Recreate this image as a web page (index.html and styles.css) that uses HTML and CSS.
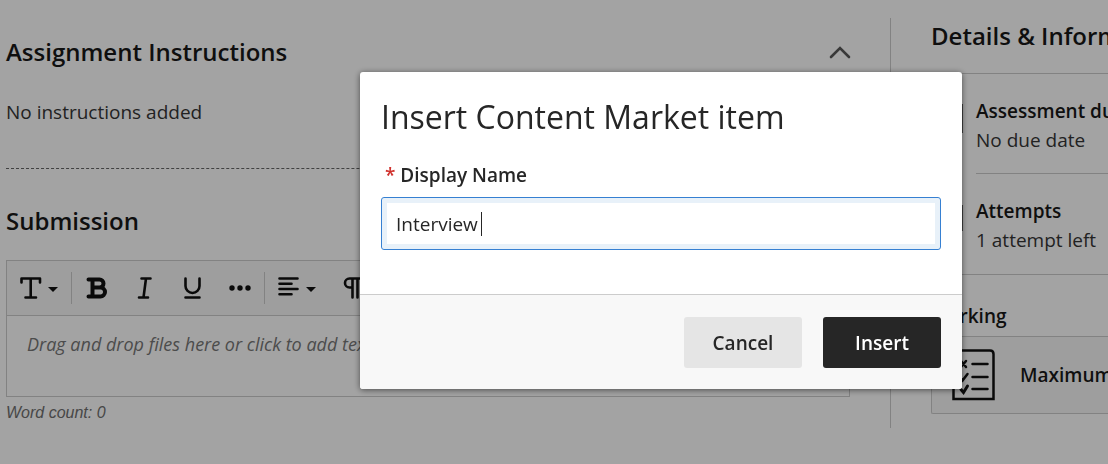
FILE: index.html
```html
<!DOCTYPE html>
<html lang="en">
<head>
<meta charset="utf-8">
<title>Assignment</title>
<link rel="stylesheet" href="styles.css">
</head>
<body>
<div class="page">
  <main class="content">
    <header class="section-head">
      <h2 class="heading">Assignment Instructions</h2>
      <button class="icon-button" type="button" aria-label="Collapse instructions">
        <svg width="24" height="24" viewBox="0 0 24 24" fill="none" stroke="#5a5a5a" stroke-width="2.6" stroke-linecap="round"><path d="M3 17 12 8l9 9"/></svg>
      </button>
    </header>
    <p class="instructions">No instructions added</p>
    <h2 class="heading">Submission</h2>
    <section class="editor" aria-label="Submission editor">
      <div class="toolbar" role="toolbar" aria-label="Formatting">
        <button class="tool" type="button" aria-label="Text style">
          <svg width="40" height="24" viewBox="0 0 40 24" fill="none" stroke="#111" stroke-width="2.6" stroke-linecap="round" stroke-linejoin="round"><path d="M2.500 6.500V2.500h18.500v4M11.700 2.500v19M6.500 21.500h10.500"/><path d="M29 11h10l-5 5z" fill="#111" stroke="none"/></svg>
        </button>
        <span class="divider"></span>
        <button class="tool" type="button" aria-label="Bold">
          <svg width="24" height="24" viewBox="0 0 24 24" fill="none" stroke="#111" stroke-width="4" stroke-linecap="round" stroke-linejoin="round"><path d="M4.500 3.500h11a4 4 0 0 1 0 8H9M8.500 3.500v17M4.500 20.500h12a4.500 4.500 0 0 0 0-9"/></svg>
        </button>
        <button class="tool" type="button" aria-label="Italic">
          <svg width="24" height="24" viewBox="0 0 24 24" fill="none" stroke="#111" stroke-width="2.600" stroke-linecap="round"><path d="M9.500 2.500h9M7 21.500h9M14 2.500l-2.500 19"/></svg>
        </button>
        <button class="tool" type="button" aria-label="Underline">
          <svg width="24" height="24" viewBox="0 0 24 24" fill="none" stroke="#111" stroke-width="2.600" stroke-linecap="round"><path d="M5.500 2.500V10a7 7 0 0 0 14 0V2.500M5.500 21.500h14"/></svg>
        </button>
        <button class="tool" type="button" aria-label="More">
          <svg width="24" height="24" viewBox="0 0 24 24" fill="#111"><circle cx="4" cy="12" r="2.700"/><circle cx="12" cy="12" r="2.700"/><circle cx="20" cy="12" r="2.700"/></svg>
        </button>
        <span class="divider"></span>
        <button class="tool" type="button" aria-label="Align">
          <svg width="40" height="24" viewBox="0 0 40 24" fill="none" stroke="#111" stroke-width="2.600" stroke-linecap="round"><path d="M2.500 2.500h18M2.500 7.700h12M2.500 13h18M2.500 18.300h12"/><path d="M29 11h10l-5 5z" fill="#111" stroke="none"/></svg>
        </button>
        <button class="tool" type="button" aria-label="Text direction">
          <svg width="24" height="24" viewBox="0 0 24 24" fill="none" stroke="#111" stroke-width="2.600" stroke-linecap="round"><path d="M21 2.500H8.500a4.500 4.500 0 0 0 0 9h3M11.500 2.500v19M16.500 2.500v19"/></svg>
        </button>
      </div>
      <textarea class="editor-body" aria-label="Submission text" rows="1" placeholder="Drag and drop files here or click to add text"></textarea>
    </section>
    <p class="word-count">Word count: 0</p>
  </main>
  <aside class="details">
    <h2 class="heading">Details &amp; Information</h2>
    <ul class="facts">
      <li class="fact">
        <svg width="32" height="32" viewBox="0 0 32 32" fill="none" stroke="#666" stroke-width="2"><path d="M2 3h29v27H2zM2 10h29"/></svg>
        <div class="fact-text"><strong>Assessment due date</strong><span>No due date</span></div>
      </li>
      <li class="fact">
        <svg width="32" height="32" viewBox="0 0 32 32" fill="none" stroke="#666" stroke-width="2"><path d="M2 4h29v24H2zM8 12h16M8 19h16"/></svg>
        <div class="fact-text"><strong>Attempts</strong><span>1 attempt left</span></div>
      </li>
    </ul>
    <h3 class="subheading">Marking</h3>
    <div class="score">
      <svg width="44" height="52" viewBox="0 0 44 52" fill="none" stroke="#111" stroke-width="2.500" stroke-linecap="round"><path d="M1.500 50V5q0-3.500 3.500-3.500h33q3.500 0 3.500 3.500v45z"/><path d="M20.500 15h15M20.500 28h15M20.500 40h15M9 12l5 6M14 12l-5 6M8 29l2.500 2.500 5-6.500"/><path d="M9 40.500l2.500 3 4-6.500" stroke-width="3"/></svg>
      <strong>Maximum points</strong>
    </div>
  </aside>
</div>
<div class="overlay">
  <form class="dialog" role="dialog" aria-modal="true" aria-labelledby="dialog-title">
    <div class="dialog-body">
      <h1 class="dialog-title" id="dialog-title">Insert Content Market item</h1>
      <label class="label" for="display-name"><span class="required">*</span> Display Name</label>
      <div class="field">
        <input class="input" id="display-name" type="text" value="Interview " required>
        <span class="caret"></span>
      </div>
    </div>
    <footer class="dialog-footer">
      <button class="button" type="button">Cancel</button>
      <button class="button button-primary" type="submit">Insert</button>
    </footer>
  </form>
</div>
</body>
</html>
```

FILE: styles.css
```css
* { box-sizing: border-box; }

body {
  margin: 0;
  overflow: hidden;
  background: #fff;
  color: #363636;
  font: 19px/24px "Open Sans", sans-serif;
}

h1, h2, h3, p, ul { margin: 0; padding: 0; }

button, input, textarea { font: inherit; color: inherit; }

strong { font-weight: 600; color: #181818; }

.page {
  display: grid;
  grid-template-columns: minmax(0, 1fr) 218px;
  padding-top: 18px;
}

.content { padding: 18px 40px 0 6px; }

.section-head {
  display: flex;
  align-items: center;
  justify-content: space-between;
}

.heading {
  color: #181818;
  font-size: 24px;
  font-weight: 600;
  line-height: 32px;
  white-space: nowrap;
}

.icon-button {
  display: flex;
  width: 24px;
  padding: 0;
  border: 0;
  background: none;
}

.section-head .icon-button { margin-right: -2px; }

.instructions {
  margin: 32px 0 36px;
  padding-bottom: 44px;
  border-bottom: 1px dashed #666;
}

.editor {
  margin-top: 23px;
  border: 1px solid #ccc;
}

.toolbar {
  display: flex;
  align-items: center;
  height: 55px;
  padding-left: 12px;
  border-bottom: 1px solid #ccc;
  background: #f8f8f8;
}

.tool {
  display: flex;
  padding: 0;
  border: 0;
  background: none;
}

.tool + .tool { margin-left: 24px; }

.divider {
  width: 1px;
  height: 32px;
  margin: 0 12px;
  background: #ccc;
}

.editor-body {
  display: block;
  width: 100%;
  height: 80px;
  padding: 16px 20px;
  border: 0;
  background: none;
  resize: none;
  font-size: 18px;
  font-style: italic;
}

.editor-body::placeholder { color: #777; opacity: 1; }

.word-count {
  margin-top: 4px;
  color: #707070;
  font: italic 16px/24px "Liberation Sans", sans-serif;
}

.details {
  height: 410px;
  padding-left: 40px;
  overflow: hidden;
  border-left: 1px solid #ccc;
  white-space: nowrap;
}

.details .heading { margin: 2px 0 21px; }

.facts {
  border-top: 1px solid #ccc;
  border-bottom: 1px solid #ccc;
  list-style: none;
}

.fact {
  display: flex;
  gap: 13px;
  padding-top: 25px;
}

.fact svg { flex: none; margin-top: 3px; }

.fact-text {
  display: grid;
  flex: 1;
  gap: 5px;
  padding-bottom: 21px;
}

.fact:first-child .fact-text { border-bottom: 1px solid #ccc; }

.fact + .fact .fact-text { padding-bottom: 22px; }

.subheading {
  margin: 29px 0 8px;
  color: #181818;
  font-size: 19px;
  font-weight: 600;
  line-height: 24px;
}

.score {
  display: flex;
  align-items: center;
  gap: 24px;
  height: 78px;
  padding-left: 20px;
  border: 1px solid #ccc;
  border-right: 0;
  border-radius: 2px 0 0 2px;
  background: #f8f8f8;
}

.score svg { flex: none; }

.overlay {
  position: fixed;
  inset: 0;
  padding: 72px 146px 0 360px;
  background: rgb(0 0 0 / 36%);
}

.dialog {
  overflow: hidden;
  border-radius: 3px;
  background: #fff;
  box-shadow: 0 1px 6px rgb(0 0 0 / 55%);
  color: #262626;
}

.dialog-body { padding: 25px 21px 44px; }

.dialog-title {
  margin-bottom: 26px;
  font-size: 32px;
  font-weight: 400;
  line-height: 40px;
}

.label {
  display: block;
  margin: 0 0 10px 4px;
  font-weight: 600;
}

.required { color: #d0312d; }

.field { position: relative; }

.input {
  display: block;
  width: 100%;
  height: 53px;
  padding: 0 14px;
  border: 1px solid #3680d2;
  border-radius: 3px;
  outline: 0;
  background: #fff;
  box-shadow: inset 0 0 0 5px #e8f1f9;
}

.caret {
  position: absolute;
  top: 15px;
  left: 100px;
  width: 1px;
  height: 24px;
  background: #262626;
}

.dialog-footer {
  display: flex;
  justify-content: flex-end;
  gap: 21px;
  padding: 22px 21px 21px;
  border-top: 1px solid #ccc;
  background: #f8f8f8;
}

.button {
  width: 118px;
  height: 51px;
  padding: 0;
  border: 0;
  border-radius: 3px;
  background: #e5e5e5;
  font-weight: 600;
}

.button-primary { background: #262626; color: #fff; }
```
